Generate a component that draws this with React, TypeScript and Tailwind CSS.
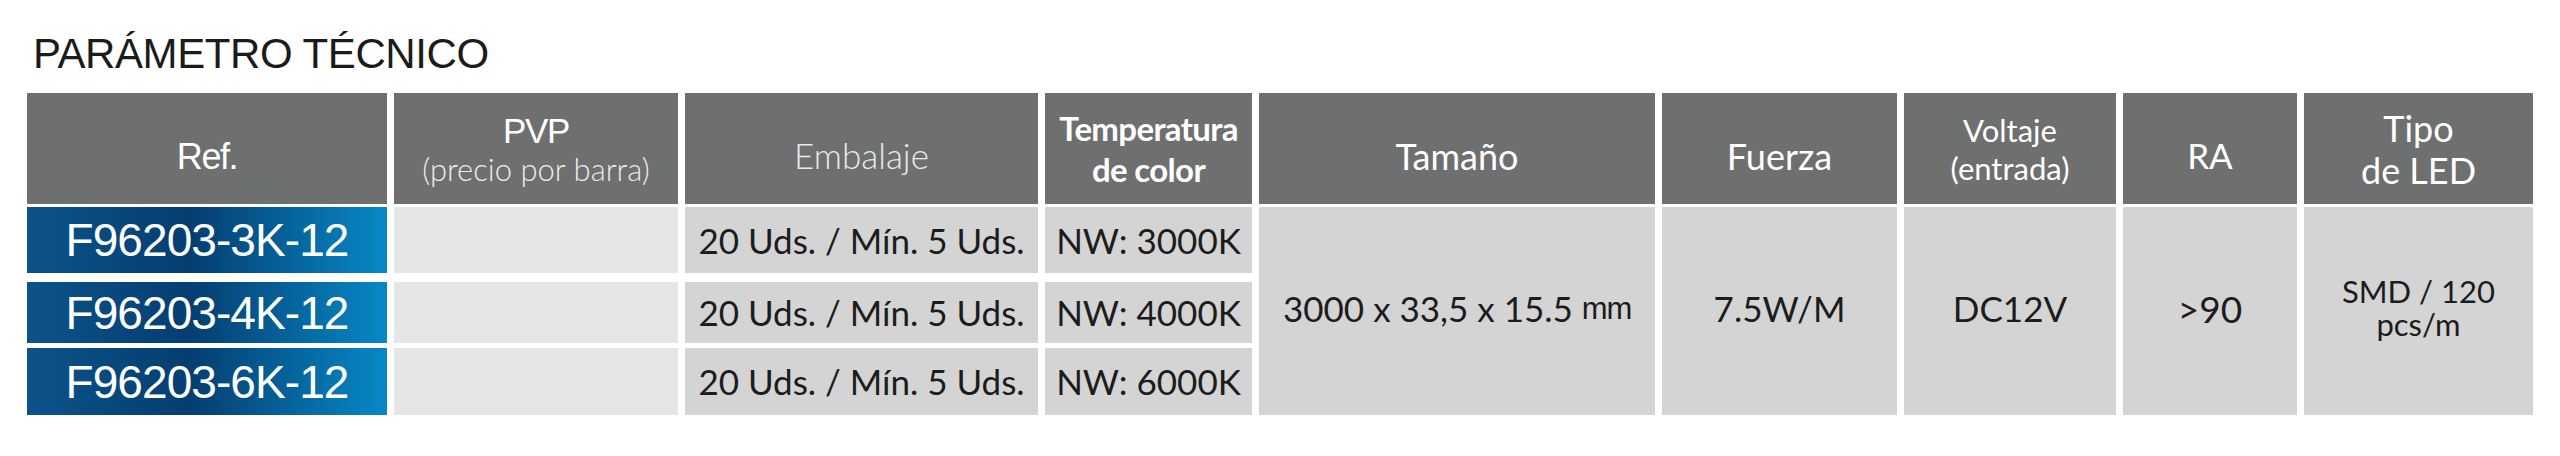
const gothic = "font-['Lato','Open_Sans',sans-serif]";
const narrow = "font-['Liberation_Sans',Arial,sans-serif]";

const refs = [
  { code: 'F96203-3K-12', temp: 'NW: 3000K', row: 'row-start-3' },
  { code: 'F96203-4K-12', temp: 'NW: 4000K', row: 'row-start-5' },
  { code: 'F96203-6K-12', temp: 'NW: 6000K', row: 'row-start-7' },
];

const head = 'bg-[#6e6f6f] text-white flex flex-col items-center justify-center text-center row-start-1';
const cell = 'bg-[#d4d4d4] text-[#1c1c1c] flex items-center justify-center text-center';

export default function App() {
  return (
    <div className="w-[2560px] h-[456px] bg-white pl-[27px] pt-[33px]">
      <h2 className="ml-[6px] mb-[18px] h-[42px] text-[42px] leading-[42px] tracking-[-0.01em] text-[#1b1b1b] font-['Liberation_Sans',Arial,sans-serif]">
        PARÁMETRO TÉCNICO
      </h2>

      <div className="grid grid-cols-[360px_284px_353px_207px_396px_235px_212px_174px_229px] grid-rows-[111px_3px_66px_9px_61px_5px_67px] gap-x-[7px]">
        {/* header */}
        <div className={`${head} col-start-1 pt-[16px]`}>
          <span className={`${narrow} text-[36px] leading-none tracking-[-0.04em]`}>Ref.</span>
        </div>
        <div className={`${head} col-start-2`}>
          <span className={`${narrow} text-[35px] leading-[40px] tracking-[-0.04em]`}>PVP</span>
          <span className={`${gothic} text-[31px] leading-[36px] font-light text-[#ececec]`}>(precio por barra)</span>
        </div>
        <div className={`${head} col-start-3 pt-[14px]`}>
          <span className={`${gothic} text-[35px] leading-none font-light text-[#eaeaea]`}>Embalaje</span>
        </div>
        <div className={`${head} col-start-4 ${gothic} text-[33px] leading-[41px] font-bold tracking-[-0.02em]`}>
          <span>Temperatura</span>
          <span>de color</span>
        </div>
        <div className={`${head} col-start-5 pt-[14px] ${gothic} text-[36px] leading-none`}>Tamaño</div>
        <div className={`${head} col-start-6 pt-[14px] ${gothic} text-[36px] leading-none`}>Fuerza</div>
        <div className={`${head} col-start-7 ${gothic} text-[31px] leading-[38px]`}>
          <span>Voltaje</span>
          <span>(entrada)</span>
        </div>
        <div className={`${head} col-start-8 pt-[14px] ${gothic} text-[35px] leading-none`}>RA</div>
        <div className={`${head} col-start-9 ${gothic} text-[36px] leading-[42px]`}>
          <span>Tipo</span>
          <span>de LED</span>
        </div>

        {/* rows */}
        {refs.map((r) => (
          <div key={r.code} className="contents">
            <div
              className={`${r.row} col-start-1 flex items-center justify-center bg-linear-to-r from-[#0c538a] via-[#053e71] via-45% to-[#0789c7] text-white ${narrow} text-[46px] leading-none tracking-[-0.02em]`}
            >
              {r.code}
            </div>
            <div className={`${r.row} col-start-2 bg-[#e6e6e6]`} />
            <div className={`${r.row} col-start-3 ${cell} ${gothic} text-[35px] leading-none`}>
              20 Uds. / Mín. 5 Uds.
            </div>
            <div className={`${r.row} col-start-4 ${cell} ${gothic} text-[35px] leading-none`}>{r.temp}</div>
          </div>
        ))}

        <div className={`row-start-3 row-end-8 col-start-5 ${cell} ${gothic} text-[35px] leading-none pb-[6px]`}>
          3000 x 33,5 x 15.5&nbsp;<span className={`${narrow} text-[31px] tracking-[-0.04em]`}>mm</span>
        </div>
        <div className={`row-start-3 row-end-8 col-start-6 ${cell} ${gothic} text-[35px] leading-none pb-[6px]`}>7.5W/M</div>
        <div className={`row-start-3 row-end-8 col-start-7 ${cell} ${gothic} text-[35px] leading-none pb-[6px]`}>DC12V</div>
        <div className={`row-start-3 row-end-8 col-start-8 ${cell} ${gothic} text-[37px] leading-none pb-[6px]`}>&gt;90</div>
        <div className={`row-start-3 row-end-8 col-start-9 ${cell} flex-col ${gothic} text-[31px] leading-[33px] pb-[6px]`}>
          <span>SMD / 120</span>
          <span>pcs/m</span>
        </div>
      </div>
    </div>
  );
}
